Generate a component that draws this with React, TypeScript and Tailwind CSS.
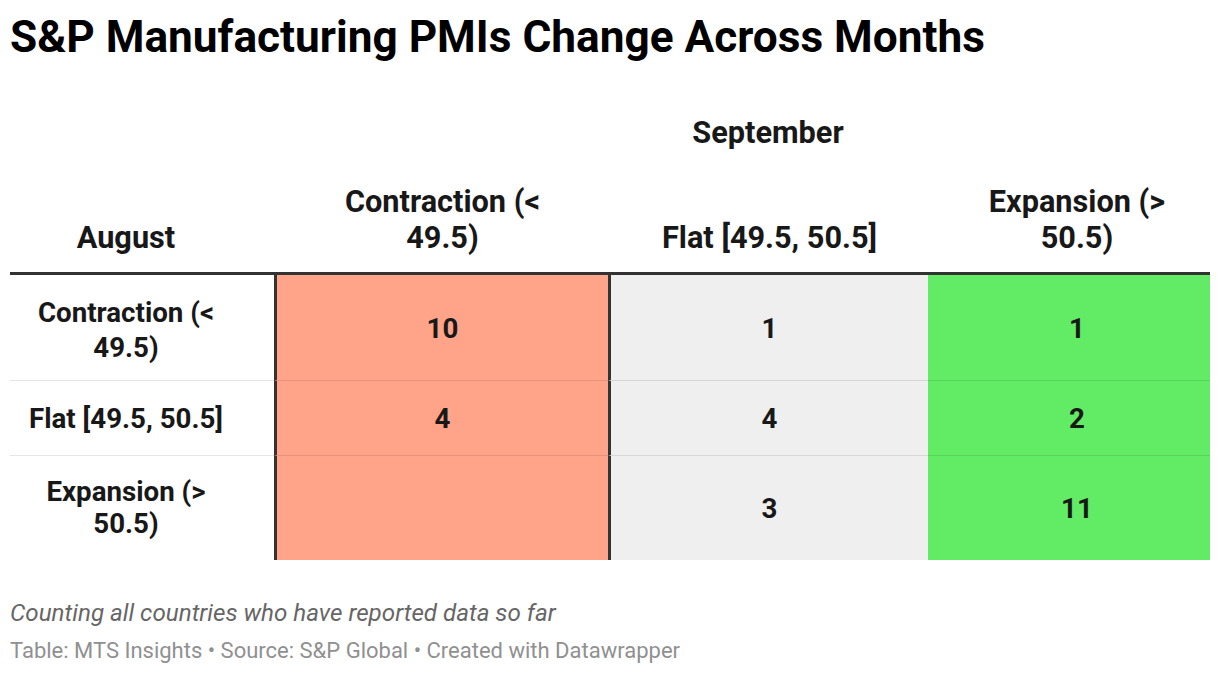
import React from "react";

const font = { fontFamily: "Roboto, 'Liberation Sans', sans-serif" };

export default function App() {
  const rows = [
    { label: ["Contraction (<", "49.5)"], vals: ["10", "1", "1"], h: "h-[105px]", lh: "leading-[35px] pt-[4px]" },
    { label: ["Flat [49.5, 50.5]"], vals: ["4", "4", "2"], h: "h-[75px]", lh: "leading-[35px]" },
    { label: ["Expansion (>", "50.5)"], vals: ["", "3", "11"], h: "h-[105px]", lh: "leading-[32px]" },
  ];
  return (
    <div className="w-[1220px] h-[674px] bg-white px-[10px] text-[#181818]" style={font}>
      <div className="pt-[14px] h-[59px]">
        <h1 className="text-[44.2px] leading-[46px] font-bold text-black">
          S&amp;P Manufacturing PMIs Change Across Months
        </h1>
      </div>
      <div className="grid grid-cols-[264px_334px_320px_282px]">
        {/* September row */}
        <div className="col-span-4 grid grid-cols-[264px_334px_320px_282px] pt-[56px]">
          <div />
          <div />
          <div className="text-center text-[30.7px] leading-[36px] font-bold">September</div>
          <div />
        </div>
        {/* column header row */}
        <div className="col-span-4 grid grid-cols-[264px_334px_320px_282px] pt-[33px] pb-[16px] border-b-[3px] border-[#333]">
          <div className="flex items-end justify-center pr-[32px] text-[30.7px] leading-[36px] font-bold">August</div>
          <div className="flex items-end justify-center text-center text-[30.7px] leading-[36px] font-bold pl-[3px]">
            <div>Contraction (&lt;<br />49.5)</div>
          </div>
          <div className="flex items-end justify-center text-center text-[30.7px] leading-[36px] font-bold pl-[3px]">
            Flat [49.5, 50.5]
          </div>
          <div className="flex items-end justify-center text-center text-[30.7px] leading-[36px] font-bold pl-[16px]">
            <div>Expansion (&gt;<br />50.5)</div>
          </div>
        </div>
        {rows.map((r, i) => (
          <React.Fragment key={i}>
            <div
              className={`${r.h} flex items-center justify-center text-center pr-[32px] text-[27.7px] ${r.lh} font-bold ${
                i > 0 ? "border-t border-[#e5e5e5]" : ""
              }`}
            >
              <div>
                {r.label.map((l, j) => (
                  <div key={j}>{l}</div>
                ))}
              </div>
            </div>
            <div
              className={`${r.h} bg-[#ffa489] border-l-[3px] border-l-[#333] flex items-center justify-center pt-[2px] text-[27.7px] font-bold ${
                i > 0 ? "border-t border-t-black/10" : ""
              }`}
            >
              {r.vals[0]}
            </div>
            <div
              className={`${r.h} bg-[#efefef] border-l-[3px] border-l-[#333] flex items-center justify-center pt-[2px] text-[27.7px] font-bold ${
                i > 0 ? "border-t border-t-black/10" : ""
              }`}
            >
              {r.vals[1]}
            </div>
            <div
              className={`${r.h} bg-[#62eb64] flex items-center justify-center pl-[16px] pt-[2px] text-[27.7px] font-bold ${
                i > 0 ? "border-t border-t-black/10" : ""
              }`}
            >
              {r.vals[2]}
            </div>
          </React.Fragment>
        ))}
      </div>
      <div className="pt-[38px] text-[24.2px] leading-[30px] italic text-[#666]">
        Counting all countries who have reported data so far
      </div>
      <div className="pt-[9px] text-[22px] leading-[28px] text-[#909090]">
        Table: MTS Insights • Source: S&amp;P Global • Created with Datawrapper
      </div>
    </div>
  );
}
